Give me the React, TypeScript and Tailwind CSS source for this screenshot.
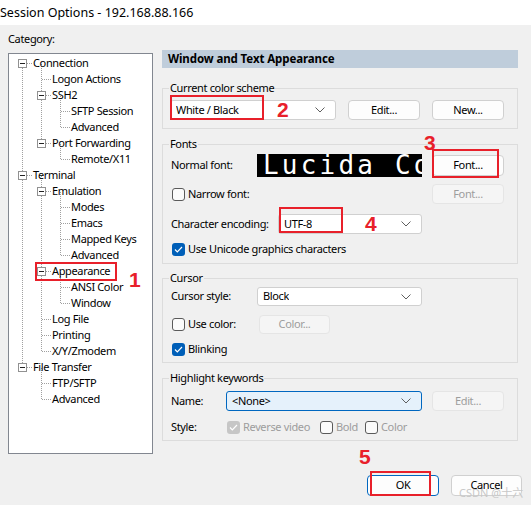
import type { ReactNode } from "react";

const FONT = "font-['Noto_Sans','DejaVu_Sans',sans-serif]";

type Node = { label: string; level: 0 | 1 | 2; expander?: boolean };

const TREE: Node[] = [
  { label: "Connection", level: 0, expander: true },
  { label: "Logon Actions", level: 1 },
  { label: "SSH2", level: 1, expander: true },
  { label: "SFTP Session", level: 2 },
  { label: "Advanced", level: 2 },
  { label: "Port Forwarding", level: 1, expander: true },
  { label: "Remote/X11", level: 2 },
  { label: "Terminal", level: 0, expander: true },
  { label: "Emulation", level: 1, expander: true },
  { label: "Modes", level: 2 },
  { label: "Emacs", level: 2 },
  { label: "Mapped Keys", level: 2 },
  { label: "Advanced", level: 2 },
  { label: "Appearance", level: 1, expander: true },
  { label: "ANSI Color", level: 2 },
  { label: "Window", level: 2 },
  { label: "Log File", level: 1 },
  { label: "Printing", level: 1 },
  { label: "X/Y/Zmodem", level: 1 },
  { label: "File Transfer", level: 0, expander: true },
  { label: "FTP/SFTP", level: 1 },
  { label: "Advanced", level: 1 },
];

const LEVEL_PAD = ["pl-[24px]", "pl-[43px]", "pl-[62px]"];
const LINE_X = [22, 41, 60];
const TEXT_X = [32, 51, 70];

const rowY = (i: number) => 63 + i * 16;

// vertical connector runs: [x, fromRow, toRow]
const VERTICALS: [number, number, number][] = [
  [22, 0, 19],
  [41, 0, 5],
  [41, 7, 18],
  [41, 19, 21],
  [60, 2, 4],
  [60, 5, 6],
  [60, 8, 12],
  [60, 13, 15],
];

function TreeLines() {
  return (
    <svg
      className="pointer-events-none absolute left-0 top-0"
      width={143}
      height={399}
      viewBox="9 54 143 399"
      shapeRendering="crispEdges"
    >
      <g stroke="#a0a0a0" strokeDasharray="1 1" fill="none">
        {VERTICALS.map(([x, a, b], i) => (
          <line key={`v${i}`} x1={x + 0.5} y1={rowY(a) + 1} x2={x + 0.5} y2={rowY(b) + 1} />
        ))}
        {TREE.map((n, i) => {
          const y = rowY(i) + 0.5;
          return <line key={`h${i}`} x1={LINE_X[n.level] + 1} y1={y} x2={TEXT_X[n.level]} y2={y} />;
        })}
      </g>
      {TREE.map((n, i) =>
        n.expander ? (
          <g key={`e${i}`}>
            <rect
              x={LINE_X[n.level] - 4 + 0.5}
              y={rowY(i) - 4 + 0.5}
              width={8}
              height={8}
              fill="#fff"
              stroke="#919191"
            />
            <line
              x1={LINE_X[n.level] - 2}
              y1={rowY(i) + 0.5}
              x2={LINE_X[n.level] + 3}
              y2={rowY(i) + 0.5}
              stroke="#222"
            />
          </g>
        ) : null,
      )}
    </svg>
  );
}

function Chevron() {
  return (
    <svg width="10" height="6" viewBox="0 0 10 6" className="shrink-0">
      <path d="M0.5 0.5 L5 5 L9.5 0.5" stroke="#5f5f5f" fill="none" strokeWidth="1" />
    </svg>
  );
}

function Combo({
  value,
  className,
  focused,
}: {
  value: string;
  className: string;
  focused?: boolean;
}) {
  return (
    <div
      className={`flex items-center justify-between rounded-[3px] border pl-[5px] pr-[10px] ${
        focused ? "border-[#0067c0] bg-[#e5f1fb]" : "border-[#d0d0d0] bg-white"
      } ${className}`}
    >
      <span className="truncate">{value}</span>
      <Chevron />
    </div>
  );
}

function Btn({
  children,
  className,
  disabled,
  primary,
}: {
  children: ReactNode;
  className: string;
  disabled?: boolean;
  primary?: boolean;
}) {
  return (
    <div
      className={`flex items-center justify-center rounded-[4px] border ${
        disabled
          ? "border-[#e5e5e5] bg-[#f5f5f5] text-[#9d9d9d]"
          : primary
            ? "border-[#0067c0] bg-[#fdfdfd]"
            : "border-[#d0d0d0] bg-[#fdfdfd]"
      } ${className}`}
    >
      {children}
    </div>
  );
}

function Check({ checked, disabled }: { checked?: boolean; disabled?: boolean }) {
  if (checked) {
    return (
      <span
        className={`flex h-[13px] w-[13px] shrink-0 items-center justify-center rounded-[3px] ${
          disabled ? "bg-[#c6c6c6]" : "bg-[#005fb8]"
        }`}
      >
        <svg width="9" height="7" viewBox="0 0 9 7">
          <path d="M1 3.5 L3.3 5.8 L8 1" stroke="#fff" strokeWidth="1.2" fill="none" />
        </svg>
      </span>
    );
  }
  return (
    <span
      className={`h-[13px] w-[13px] shrink-0 rounded-[3px] border ${
        disabled ? "border-[#c6c6c6] bg-[#f7f7f7]" : "border-[#5a5a5a] bg-[#fbfbfb]"
      }`}
    />
  );
}

function Group({
  title,
  className,
  children,
}: {
  title: string;
  className: string;
  children: ReactNode;
}) {
  return (
    <fieldset className={`w-[356px] border border-[#dcdcdc] ${className}`}>
      <legend className="ml-[6px] px-[1px] leading-[14px]">{title}</legend>
      {children}
    </fieldset>
  );
}

function Mark({ className }: { className: string }) {
  return <div className={`pointer-events-none absolute border-2 border-[#e8202a] ${className}`} />;
}

function Num({ n, className }: { n: string; className: string }) {
  return (
    <div
      className={`pointer-events-none absolute font-['Liberation_Sans',sans-serif] text-[21px] font-bold leading-none tracking-normal text-[#e8202a] ${className}`}
    >
      {n}
    </div>
  );
}

export default function App() {
  return (
    <div
      className={`relative h-[505px] w-[531px] overflow-hidden bg-[#f0f0f0] text-[11px] tracking-[-0.35px] text-black ${FONT}`}
    >
      <div className="h-[25px] bg-white text-[12.5px] leading-[25px] tracking-normal">
        Session Options - 192.168.88.166
      </div>

      <div className="flex">
        {/* category tree */}
        <div className="ml-[8px] w-[145px]">
          <div className="h-[28px] leading-[28px]">Category:</div>
          <div className="relative h-[401px] border border-[#828790] bg-white pt-[1px]">
            <TreeLines />
            {TREE.map((n, i) => (
              <div key={i} className={`relative h-[16px] leading-[16px] ${LEVEL_PAD[n.level]}`}>
                {n.label}
              </div>
            ))}
          </div>
        </div>

        {/* settings page */}
        <div className="ml-[9px] w-[360px]">
          <div className="mt-[25px] h-[18px] w-[356px] bg-[#bfcddb] pl-[6px] text-[11.5px] font-bold leading-[18px] tracking-[-0.1px]">
            Window and Text Appearance
          </div>

          <Group title="Current color scheme" className="mt-[13px] pb-[8px]">
            <div className="flex items-center pl-[7px] pt-[5px]">
              <Combo value="White / Black" className="h-[20px] w-[166px]" />
              <Btn className="ml-[12px] h-[20px] w-[72px]">Edit...</Btn>
              <Btn className="ml-[12px] h-[20px] w-[72px]">New...</Btn>
            </div>
          </Group>

          <Group title="Fonts" className="mt-[8px] pb-[7px]">
            <div className="mt-[3px] flex h-[23px] items-center pl-[8px]">
              <span className="w-[86px]">Normal font:</span>
              <div className="h-[23px] w-[165px] overflow-hidden whitespace-nowrap bg-black pl-[6px] font-['DejaVu_Sans_Mono',monospace] text-[26px] leading-[23px] tracking-[3.2px] text-white">
                Lucida Console
              </div>
              <Btn className="ml-[10px] h-[21px] w-[72px]">Font...</Btn>
            </div>
            <div className="mt-[7px] flex h-[20px] items-center pl-[9px]">
              <Check />
              <span className="ml-[3px] w-[244px]">Narrow font:</span>
              <Btn disabled className="h-[20px] w-[72px]">
                Font...
              </Btn>
            </div>
            <div className="mt-[10px] flex h-[20px] items-center pl-[8px]">
              <span className="w-[107px]">Character encoding:</span>
              <Combo value="UTF-8" className="h-[20px] w-[144px]" />
            </div>
            <div className="mt-[8px] flex h-[14px] items-center pl-[9px]">
              <Check checked />
              <span className="ml-[3px]">Use Unicode graphics characters</span>
            </div>
          </Group>

          <Group title="Cursor" className="mt-[7px] pb-[6px]">
            <div className="mt-[2px] flex h-[19px] items-center pl-[8px]">
              <span className="w-[86px]">Cursor style:</span>
              <Combo value="Block" className="h-[19px] w-[165px]" />
            </div>
            <div className="mt-[9px] flex h-[19px] items-center pl-[9px]">
              <Check />
              <span className="ml-[3px] w-[71px]">Use color:</span>
              <Btn disabled className="h-[19px] w-[71px]">
                Color...
              </Btn>
            </div>
            <div className="mt-[8px] flex h-[14px] items-center pl-[9px]">
              <Check checked />
              <span className="ml-[3px]">Blinking</span>
            </div>
          </Group>

          <Group title="Highlight keywords" className="mt-[8px] pb-[6px]">
            <div className="mt-[6px] flex h-[20px] items-center pl-[8px]">
              <span className="w-[55px]">Name:</span>
              <Combo focused value="<None>" className="h-[20px] w-[196px]" />
              <Btn disabled className="ml-[10px] h-[20px] w-[72px]">
                Edit...
              </Btn>
            </div>
            <div className="mt-[9px] flex h-[14px] items-center pl-[8px]">
              <span className="w-[56px]">Style:</span>
              <Check checked disabled />
              <span className="ml-[3px] w-[77px] text-[#9d9d9d]">Reverse video</span>
              <Check />
              <span className="ml-[3px] w-[29px] text-[#9d9d9d]">Bold</span>
              <Check />
              <span className="ml-[3px] text-[#9d9d9d]">Color</span>
            </div>
          </Group>

          <div className="mt-[34px] flex justify-end gap-[12px]">
            <Btn primary className="h-[21px] w-[72px]">
              OK
            </Btn>
            <Btn className="h-[21px] w-[71px]">Cancel</Btn>
          </div>
        </div>
      </div>

      <div className="pointer-events-none absolute left-[459px] top-[485px] font-['Noto_Sans','Noto_Sans_CJK_SC',sans-serif] text-[11px] tracking-normal text-[#c8c8c8]">
        CSDN @十六
      </div>

      {/* step annotations */}
      <Mark className="left-[35px] top-[262px] h-[19px] w-[82px]" />
      <Num n="1" className="left-[129px] top-[269px]" />
      <Mark className="left-[170px] top-[95px] h-[25px] w-[94px]" />
      <Num n="2" className="left-[277px] top-[99px]" />
      <Mark className="left-[432px] top-[149px] h-[29px] w-[67px]" />
      <Num n="3" className="left-[424px] top-[132px]" />
      <Mark className="left-[279px] top-[207px] h-[26px] w-[64px]" />
      <Num n="4" className="left-[365px] top-[213px]" />
      <Mark className="left-[370px] top-[471px] h-[25px] w-[61px]" />
      <Num n="5" className="left-[359px] top-[446px]" />
    </div>
  );
}
